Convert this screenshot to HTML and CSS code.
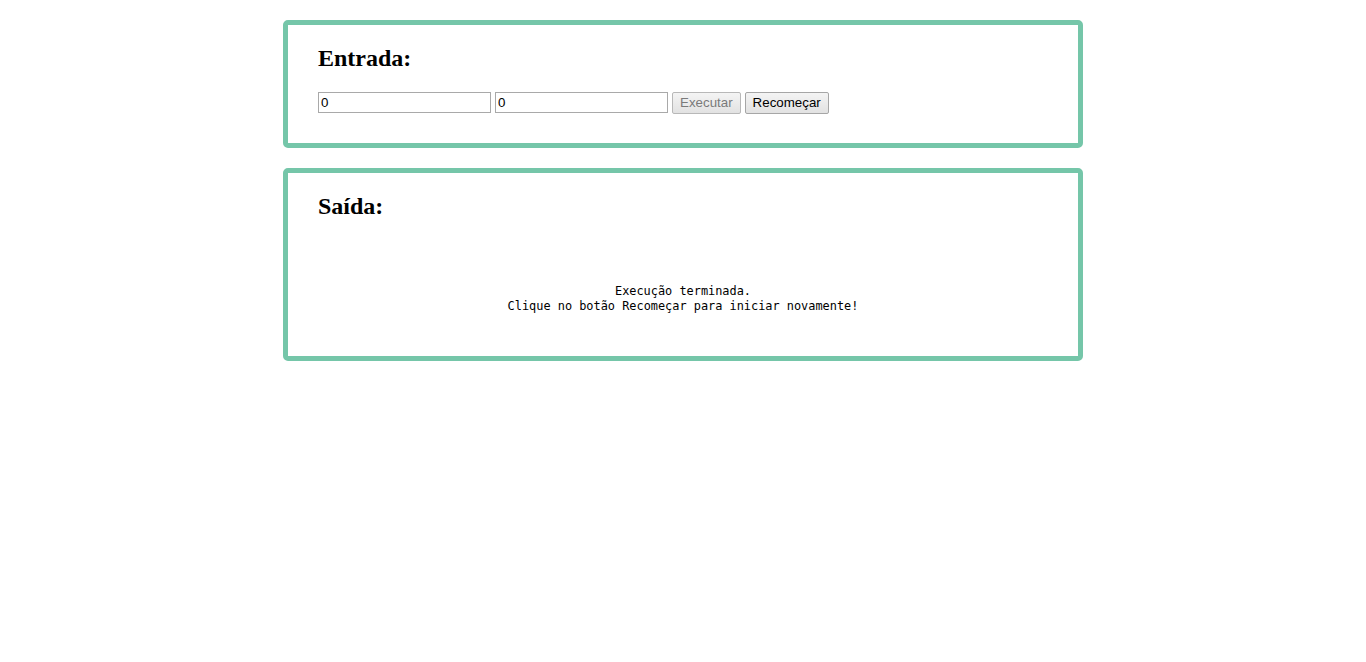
FILE: index.html
```html
<!DOCTYPE html>
<html lang="pt-BR">
<head>
<meta charset="utf-8">
<title>Entrada / Saída</title>
<link rel="stylesheet" href="styles.css">
</head>
<body>
<main class="page">
  <section class="panel panel-input">
    <h2 class="panel-title">Entrada:</h2>
    <form class="controls">
      <input class="field" type="text" value="0">
      <input class="field" type="text" value="0">
      <button class="btn" type="button" disabled>Executar</button>
      <button class="btn" type="button">Recomeçar</button>
    </form>
  </section>
  <section class="panel panel-output">
    <h2 class="panel-title">Saída:</h2>
    <div class="output">Execução terminada.<br>Clique no botão Recomeçar para iniciar novamente!</div>
  </section>
</main>
</body>
</html>
```

FILE: styles.css
```css
html, body {
  margin: 0;
  padding: 0;
  background: #ffffff;
}

body {
  font-family: "Liberation Serif", "Times New Roman", serif;
  color: #000;
}

.page {
  width: 800px;
  margin: 0 auto;
  padding-top: 20px;
  display: flex;
  flex-direction: column;
  gap: 20px;
}

.panel {
  box-sizing: border-box;
  border: 5px solid #75c6a9;
  border-radius: 5px;
  padding: 0 30px;
}

.panel-input {
  height: 128px;
}

.panel-output {
  height: 193px;
}

.panel-title {
  font-size: 24px;
  font-weight: bold;
  margin: 20px 0 19px;
  line-height: 27.6px;
}

.controls {
  display: flex;
  gap: 4px;
  align-items: flex-start;
  margin: 0;
}

.field {
  box-sizing: border-box;
  width: 173px;
  height: 21px;
  margin: 0;
  padding: 1px 2px;
  border: 1px solid #a9a9a9;
  border-radius: 0;
  background: #fff;
  font-family: "Liberation Sans", Arial, sans-serif;
  font-size: 13.33px;
  color: #000;
}

.btn {
  box-sizing: border-box;
  height: 22px;
  margin: 0;
  padding: 0 7px;
  border: 1px solid #a6a6a6;
  border-radius: 2px;
  background: linear-gradient(#f4f4f4, #e2e2e2);
  font-family: "Liberation Sans", Arial, sans-serif;
  font-size: 13.33px;
  color: #000;
}

.btn:disabled {
  color: #7a7a7a;
  border-color: #b8b8b8;
}

.output {
  margin-top: 63px;
  text-align: center;
  font-family: "DejaVu Sans Mono", "Liberation Mono", monospace;
  font-size: 11.9px;
  line-height: 15px;
  white-space: pre;
}
```
